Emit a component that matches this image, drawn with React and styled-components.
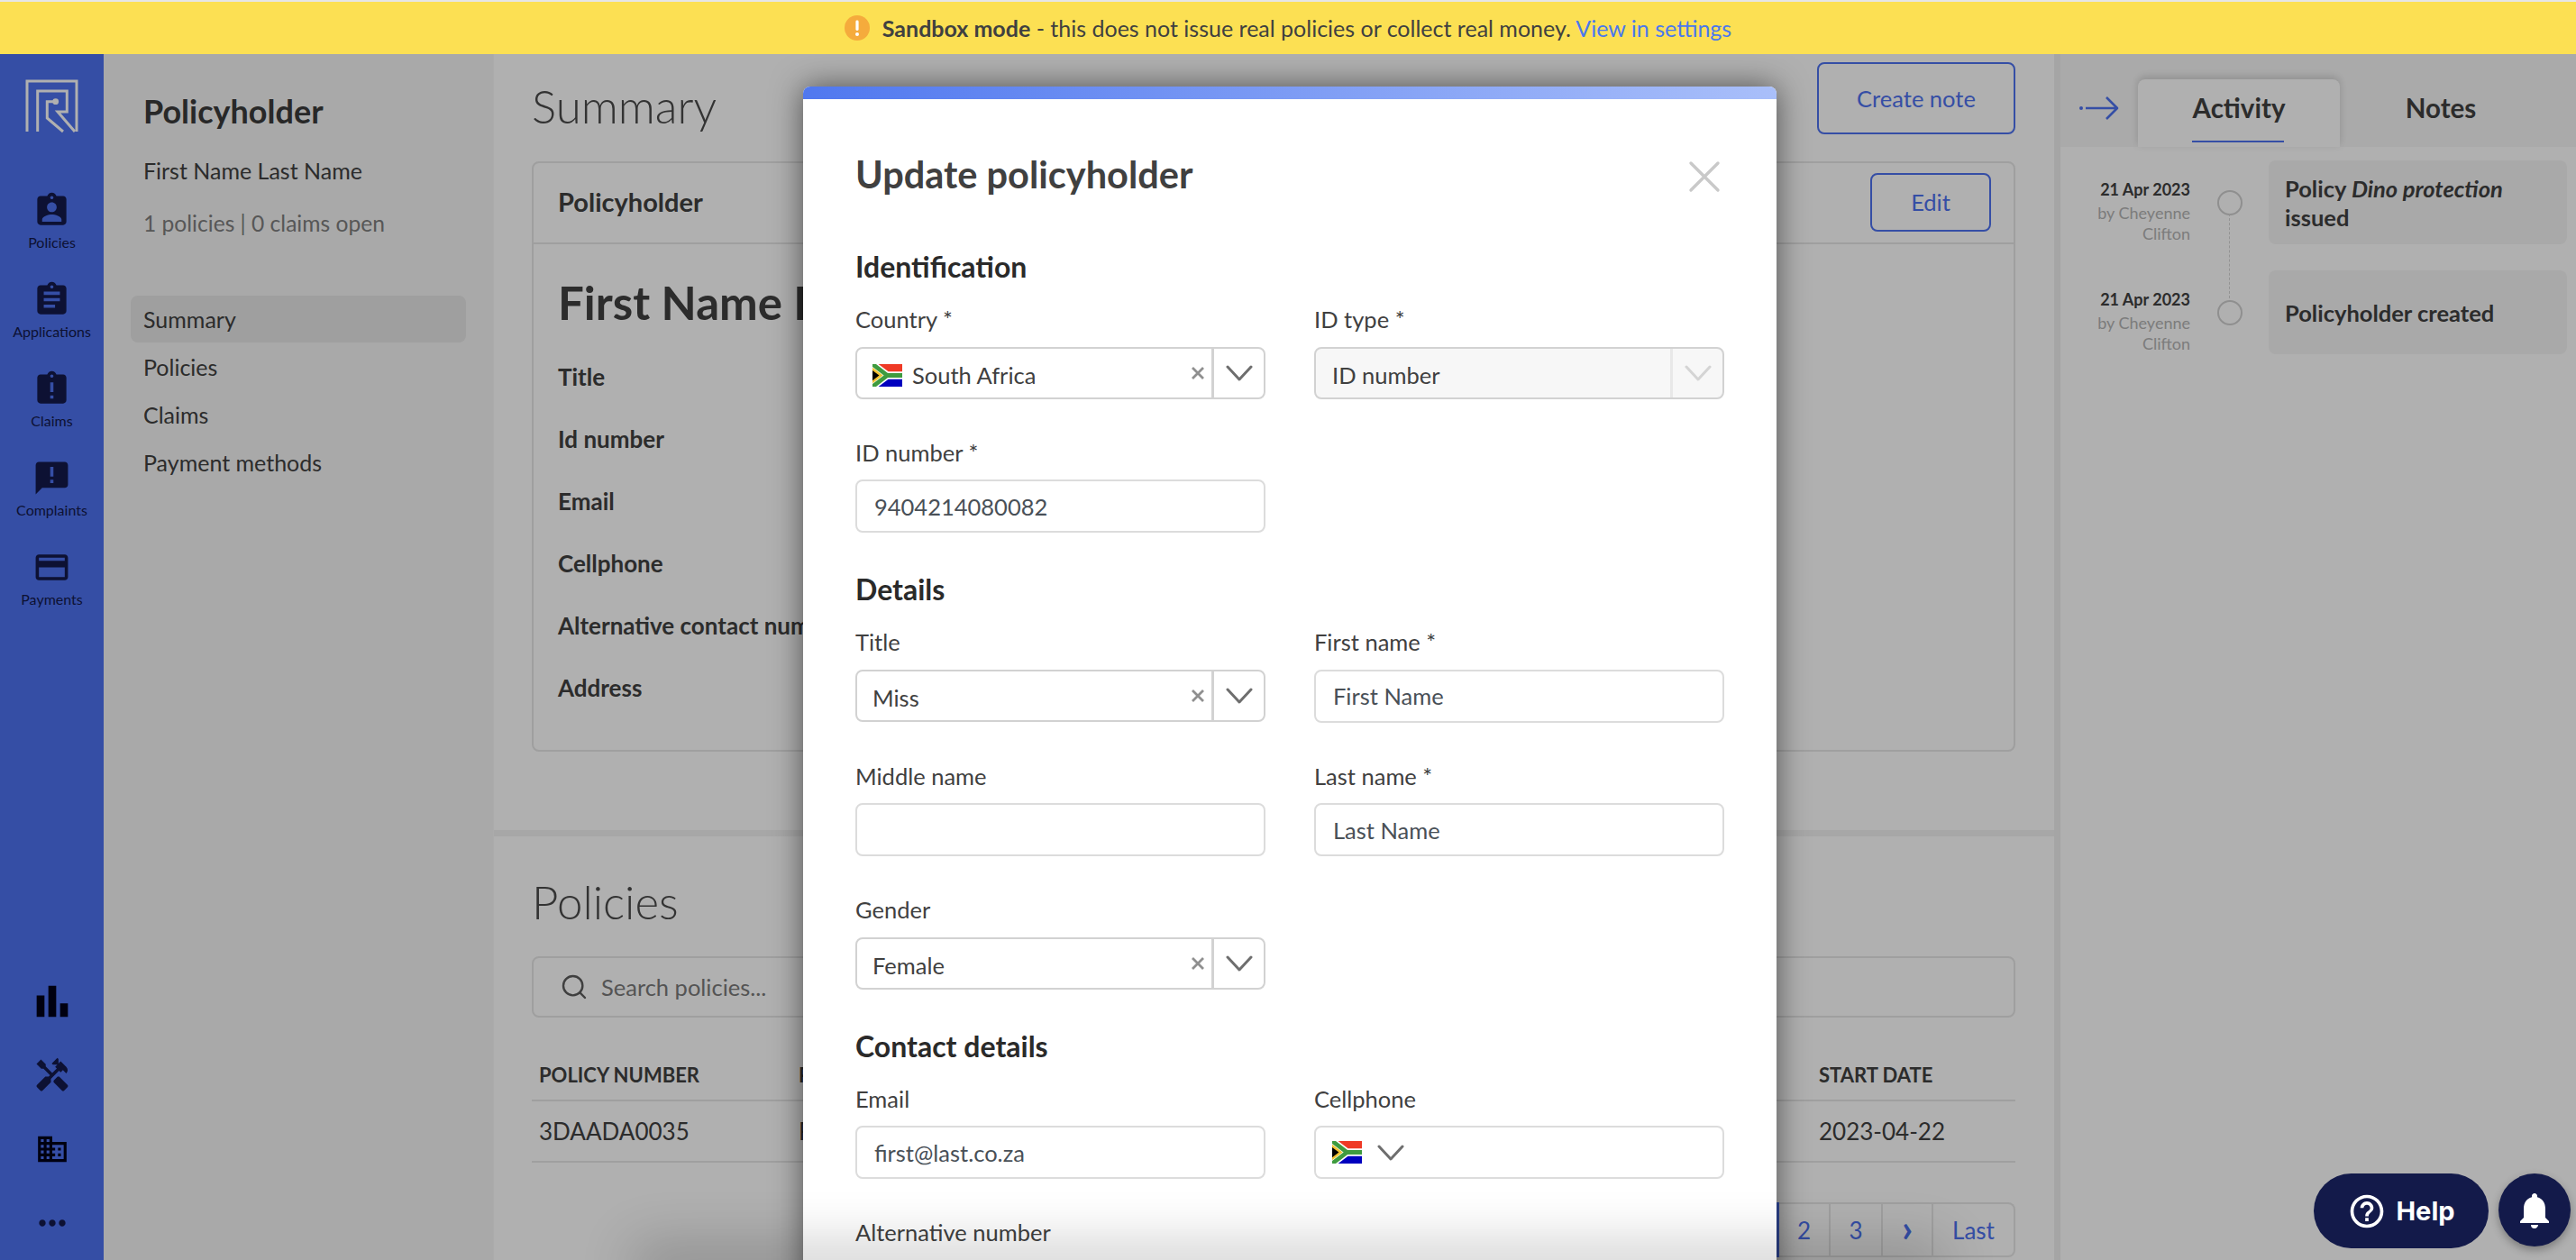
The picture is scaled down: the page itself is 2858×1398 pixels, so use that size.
import React from "react";
import styled, { createGlobalStyle } from "styled-components";
import {
  MdAssignmentInd,
  MdAssignment,
  MdAssignmentLate,
  MdAnnouncement,
  MdCreditCard,
  MdBarChart,
  MdHandyman,
  MdDomain,
  MdMoreHoriz,
  MdNotifications,
  MdHelpOutline,
} from "react-icons/md";
import { Search } from "lucide-react";

const Global = createGlobalStyle`
  * { box-sizing: border-box; }
  html, body { margin: 0; padding: 0; height: 100%; overflow: hidden; background: #fff; }
  body { font-family: Lato, "Noto Sans", sans-serif; color: #404040; }
`;

const Page = styled.div`
  display: flex;
  flex-direction: column;
  height: 100vh;
  overflow: hidden;
  position: relative;
`;

const Banner = styled.div`
  height: 60px;
  flex: none;
  background: #fce053;
  border-top: 2px solid #e6e6e6;
  display: flex;
  align-items: center;
  justify-content: center;
  gap: 14px;
  font-size: 25px;
  color: #404040;
  b { font-weight: 700; }
  a { color: #4a78ee; text-decoration: none; }
`;

const Shell = styled.div`
  flex: 1;
  min-height: 0;
  display: flex;
`;

const Sidebar = styled.nav`
  width: 115px;
  flex: none;
  background: #4d71ef;
  display: flex;
  flex-direction: column;
  align-items: center;
  color: #13194a;
  padding-top: 28px;
`;

const Logo = styled.svg`
  width: 60px;
  height: 60px;
  margin-bottom: 64px;
  flex: none;
`;

const NavItem = styled.div`
  height: 99px;
  flex: none;
  width: 100%;
  display: flex;
  flex-direction: column;
  align-items: center;
  font-size: 16px;
  line-height: 20px;
  color: #13194a;
  svg { display: block; margin-bottom: 4px; }
`;

const ToolIcons = styled.div`
  margin-top: auto;
  display: flex;
  flex-direction: column;
  align-items: center;
  color: #000018;
`;

const ToolSlot = styled.div`
  height: 82px;
  display: flex;
  align-items: center;
  justify-content: center;
  color: ${(p) => p.$color || "#000018"};
`;

const LeftPanel = styled.aside`
  width: 432px;
  flex: none;
  background: #f5f5f5;
  padding: 41px 30px 0;
`;

const PanelTitle = styled.h2`
  margin: 0;
  padding-left: 14px;
  font-size: 36px;
  line-height: 44px;
  font-weight: 700;
  color: #3a3a3a;
`;

const PanelName = styled.div`
  margin-top: 26px;
  padding-left: 14px;
  font-size: 25px;
  line-height: 36px;
  color: #404040;
`;

const PanelMeta = styled.div`
  margin-top: 23px;
  padding-left: 14px;
  font-size: 24.6px;
  line-height: 36px;
  color: #7e7e7e;
`;

const SideMenu = styled.div`
  margin-top: 62px;
  display: flex;
  flex-direction: column;
  gap: 1px;
`;

const SideLink = styled.div`
  height: 52px;
  line-height: 52px;
  padding-left: 14px;
  border-radius: 8px;
  font-size: 25px;
  color: #404040;
  background: ${(p) => (p.$active ? "#e6e6e6" : "transparent")};
`;

const Main = styled.main`
  width: 1739px;
  flex: none;
  background: #fff;
  border-right: 7px solid #f0f0f0;
  border-left: 1px solid #f8f8f8;
  overflow: hidden;
`;

const Section = styled.section`
  padding: ${(p) => p.$pad};
  border-bottom: ${(p) => (p.$rule ? "7px solid #f2f2f2" : "none")};
`;

const SectionHead = styled.div`
  display: flex;
  justify-content: space-between;
  align-items: flex-start;
  height: 80px;
`;

const PageHeading = styled.h1`
  margin: ${(p) => p.$margin || 0};
  font-weight: 300;
  font-size: 51px;
  line-height: 70px;
  color: #4a4a4a;
`;

const OutlineButton = styled.button`
  width: ${(p) => p.$w};
  height: ${(p) => p.$h};
  border: 2px solid #4d71ef;
  border-radius: 8px;
  background: transparent;
  color: #4d71ef;
  font-family: inherit;
  font-size: 25.5px;
`;

const Card = styled.div`
  margin-top: 30px;
  border: 2px solid #e6e6e6;
  border-radius: 8px;
`;

const CardHead = styled.div`
  height: 90px;
  display: flex;
  justify-content: space-between;
  align-items: center;
  padding: 0 25px 2px 27px;
  border-bottom: 2px solid #e6e6e6;
`;

const CardTitle = styled.div`
  font-size: 29px;
  font-weight: 700;
  color: #404040;
  padding-bottom: 2px;
`;

const CardBody = styled.div`
  padding: 30px 27px 34px;
`;

const BigName = styled.div`
  font-size: 51px;
  line-height: 70px;
  font-weight: 700;
  color: #404040;
  margin-bottom: 13px;
  white-space: nowrap;
`;

const InfoRow = styled.div`
  height: 69px;
  line-height: 69px;
  font-size: 26px;
  font-weight: 700;
  color: #404040;
  white-space: nowrap;
`;

const SearchBox = styled.div`
  margin-top: 25px;
  height: 68px;
  border: 2px solid #e6e6e6;
  border-radius: 8px;
  display: flex;
  align-items: center;
  gap: 14px;
  padding-left: 29px;
  color: #7a7a7a;
  font-size: 25.5px;
`;

const TableGrid = styled.div`
  margin-top: 35px;
  display: grid;
  grid-template-columns: 288px 1fr 226px;
`;

const HeadCell = styled.div`
  height: 58px;
  line-height: 58px;
  padding-left: 8px;
  font-size: 22px;
  font-weight: 700;
  color: #404040;
  border-bottom: 2px solid #e6e6e6;
  text-transform: uppercase;
`;

const BodyCell = styled.div`
  height: 68px;
  line-height: 66px;
  padding-left: 8px;
  font-size: 26px;
  color: #404040;
  border-bottom: 2px solid #e6e6e6;
`;

const Pager = styled.div`
  margin-top: 44px;
  display: flex;
  justify-content: flex-end;
`;

const PageCell = styled.div`
  width: ${(p) => p.$w};
  height: 61px;
  display: flex;
  align-items: center;
  justify-content: center;
  font-size: ${(p) => (p.$arrow ? "42px" : "26px")};
  font-weight: ${(p) => (p.$arrow ? 700 : 400)};
  padding-bottom: ${(p) => (p.$arrow ? "6px" : "0")};
  color: ${(p) => (p.$active ? "#fff" : "#4d71ef")};
  background: ${(p) => (p.$active ? "#4d71ef" : "transparent")};
  border: 2px solid ${(p) => (p.$active ? "#4d71ef" : "#e6e6e6")};
  border-left-width: ${(p) => (p.$active ? "2px" : "0")};
  &:last-child { border-radius: 0 8px 8px 0; }
`;

const RightPanel = styled.aside`
  flex: 1;
  min-width: 0;
  background: #fff;
`;

const TabBar = styled.div`
  height: 103px;
  background: #f7f7f7;
  display: flex;
  align-items: flex-end;
  padding-left: 21px;
`;

const CollapseArrow = styled.svg`
  width: 44px;
  height: 28px;
  flex: none;
  margin: 0 21px 29px 0;
`;

const Tab = styled.div`
  width: 224px;
  height: 75px;
  position: relative;
  display: flex;
  align-items: center;
  justify-content: center;
  padding-bottom: 12px;
  font-size: 29.5px;
  font-weight: 700;
  color: #404040;
  background: ${(p) => (p.$active ? "#fff" : "transparent")};
  border-radius: 8px 8px 0 0;
  box-shadow: ${(p) => (p.$active ? "0 -3px 10px rgba(0,0,0,.16)" : "none")};
`;

const TabUnderline = styled.span`
  position: absolute;
  bottom: 5px;
  left: 60px;
  width: 102px;
  height: 2px;
  background: #4d71ef;
`;

const Timeline = styled.div`
  padding: 15px 10px 0 0;
  display: flex;
  flex-direction: column;
  gap: 29px;
`;

const TimelineRow = styled.div`
  display: grid;
  grid-template-columns: 144px 87px 1fr;
  min-height: 93px;
`;

const TimeMeta = styled.div`
  text-align: right;
  padding-top: 18px;
  padding-left: 20px;
  font-size: 18px;
  line-height: 23px;
  color: #b4b4b4;
`;

const TimeDate = styled.div`
  font-weight: 700;
  font-size: 18px;
  line-height: 29px;
  color: #404040;
`;

const DotCell = styled.div`
  display: flex;
  align-items: center;
  justify-content: center;
`;

const Dot = styled.div`
  width: 28px;
  height: 28px;
  border-radius: 50%;
  border: 2px solid #d0d0d0;
  position: relative;
  ${(p) =>
    p.$line
      ? `&::after {
          content: "";
          position: absolute;
          left: 11px;
          top: 100%;
          height: 94px;
          border-left: 1px dashed #d6d6d6;
        }`
      : ""}
`;

const EventCard = styled.div`
  background: #f5f5f5;
  border-radius: 8px;
  display: flex;
  align-items: center;
  padding: 0 18px;
  font-size: 25.5px;
  line-height: 32px;
  font-weight: 700;
  color: #404040;
  em { font-style: italic; }
`;

const Backdrop = styled.div`
  position: absolute;
  inset: 60px 0 0 0;
  background: rgba(0, 0, 0, 0.31);
  display: flex;
  justify-content: center;
  padding-left: 4px;
  overflow: hidden;
`;

const Modal = styled.div`
  width: 1080px;
  margin-top: 36px;
  background: #fff;
  border-radius: 8px 8px 0 0;
  box-shadow: 0 0 34px rgba(0, 0, 0, 0.55);
  flex: none;
  height: max-content;
  border-top: 14px solid transparent;
  position: relative;
  padding: 58px 58px 200px;
`;

const ModalBar = styled.div`
  position: absolute;
  top: -14px;
  left: 0;
  right: 0;
  height: 14px;
  border-radius: 8px 8px 0 0;
  background: linear-gradient(90deg, #5078ef, #a9bffa);
`;

const ModalHead = styled.div`
  display: flex;
  justify-content: space-between;
  align-items: center;
  height: 50px;
  margin-bottom: 58px;
  padding-right: 4px;
`;

const ModalTitle = styled.h2`
  margin: 0;
  font-size: 41.5px;
  line-height: 50px;
  font-weight: 700;
  color: #404040;
`;

const CloseIcon = styled.svg`
  width: 36px;
  height: 36px;
  margin-top: 6px;
`;

const GroupTitle = styled.h3`
  margin: ${(p) => p.$top || "43px"} 0 20px;
  font-size: 32px;
  line-height: 40px;
  font-weight: 700;
  color: #2a2a2a;
`;

const FieldGrid = styled.div`
  display: grid;
  grid-template-columns: 455px 455px;
  column-gap: 54px;
  row-gap: 41px;
`;

const Field = styled.div`
  grid-column: ${(p) => p.$col || "auto"};
`;

const Label = styled.label`
  display: block;
  font-size: 25.5px;
  line-height: 36px;
  margin-bottom: ${(p) => p.$gap || "12.5px"};
  color: #404040;
`;

const TextInput = styled.input`
  display: block;
  width: 100%;
  height: 59px;
  border: 2px solid #dcdcdc;
  border-radius: 8px;
  padding: 0 19px;
  font-family: inherit;
  font-size: 25.5px;
  color: #495057;
  background: #fff;
  outline: none;
`;

const SelectBox = styled.div`
  height: 58px;
  border: 2px solid #d2d2d2;
  border-radius: 8px;
  display: flex;
  align-items: stretch;
  background: ${(p) => (p.$disabled ? "#f7f7f7" : "#fff")};
  color: #404040;
  font-size: 25.5px;
`;

const SelectValue = styled.div`
  flex: 1;
  display: flex;
  align-items: center;
  gap: 11px;
  padding: 5px 0 0 ${(p) => (p.$disabled ? "18px" : "17px")};
`;

const ClearMark = styled.svg`
  width: 16px;
  height: 16px;
  align-self: center;
  margin: 0 7px 0 0;
  flex: none;
`;

const SelectDivider = styled.div`
  width: 3px;
  background: ${(p) => (p.$disabled ? "#e8e8e8" : "#d2d2d2")};
`;

const ChevronWrap = styled.div`
  width: 55px;
  display: flex;
  align-items: center;
  justify-content: center;
  flex: none;
`;

const PhoneBox = styled.div`
  height: 59px;
  border: 2px solid #dcdcdc;
  border-radius: 8px;
  display: flex;
  align-items: center;
  padding-left: 18px;
`;

const PhoneChevron = styled.div`
  margin-left: 17px;
  display: flex;
`;

const FooterShade = styled.div`
  position: absolute;
  bottom: -14px;
  left: 720px;
  width: 1420px;
  height: 14px;
  box-shadow: 0 0 60px 18px rgba(0, 0, 0, 0.2);
  pointer-events: none;
`;

const Floating = styled.div`
  position: absolute;
  right: 6px;
  bottom: 13px;
  display: flex;
  gap: 11px;
  align-items: flex-start;
`;

const HelpButton = styled.div`
  width: 194px;
  height: 83px;
  border-radius: 42px;
  background: #131a4a;
  color: #fff;
  display: flex;
  align-items: center;
  justify-content: center;
  gap: 10px;
  font-family: Inter, "Noto Sans", sans-serif;
  font-size: 29px;
  font-weight: 700;
`;

const BellButton = styled.div`
  width: 80px;
  height: 81px;
  border-radius: 50%;
  background: #131a4a;
  color: #fff;
  display: flex;
  align-items: center;
  justify-content: center;
  box-shadow: 0 4px 10px rgba(0, 0, 0, 0.3);
`;

const Flag = ({ w = 33, h = 25 }) => (
  <svg width={w} height={h} viewBox="0 0 900 600" preserveAspectRatio="none" style={{ flex: "none" }}>
    <rect width="900" height="300" fill="#ef3a26" />
    <rect y="300" width="900" height="300" fill="#0000bf" />
    <path d="M-40 -27 L450 300 H940 M-40 627 L450 300" fill="none" stroke="#fff" strokeWidth="200" />
    <path d="M-40 -27 L450 300 H940 M-40 627 L450 300" fill="none" stroke="#3f9b3f" strokeWidth="120" />
    <path d="M0 90 L315 300 L0 510Z" fill="#f2c230" />
    <path d="M0 165 L202 300 L0 435Z" fill="#000" />
  </svg>
);

const Chevron = ({ color = "#6e6e6e" }) => (
  <svg width="30" height="18" viewBox="0 0 30 18" fill="none">
    <path d="M2 2 L15 16 L28 2" stroke={color} strokeWidth="3" strokeLinecap="round" strokeLinejoin="round" />
  </svg>
);

const Select = ({ value, flag, disabled }) => (
  <SelectBox $disabled={disabled}>
    <SelectValue $disabled={disabled}>
      {flag && <Flag />}
      <span>{value}</span>
    </SelectValue>
    {!disabled && (
      <ClearMark viewBox="0 0 16 16">
        <path d="M2 2 L14 14 M14 2 L2 14" stroke="#8f8f8f" strokeWidth="2.8" />
      </ClearMark>
    )}
    <SelectDivider $disabled={disabled} />
    <ChevronWrap>
      <Chevron color={disabled ? "#d4d4d4" : "#6e6e6e"} />
    </ChevronWrap>
  </SelectBox>
);

const events = [
  { body: <>Policy <em>Dino protection</em> issued</>, line: true },
  { body: <>Policyholder created</>, line: false },
];

const navItems = [
  ["Policies", MdAssignmentInd],
  ["Applications", MdAssignment],
  ["Claims", MdAssignmentLate],
  ["Complaints", MdAnnouncement],
  ["Payments", MdCreditCard],
];

export default function App() {
  return (
    <Page>
      <Global />
      <Banner>
        <svg width="28" height="28" viewBox="0 0 28 28">
          <circle cx="14" cy="14" r="14" fill="#f5ab3c" />
          <rect x="12.4" y="5.5" width="3.2" height="11.5" rx="1.4" fill="#fff" />
          <circle cx="14" cy="21" r="2" fill="#fff" />
        </svg>
        <div>
          <b>Sandbox mode</b> - this does not issue real policies or collect real money. <a>View in settings</a>
        </div>
      </Banner>
      <Shell>
        <Sidebar>
          <Logo viewBox="0 0 60 60" fill="none" stroke="#fff" strokeWidth="3">
            <path d="M2 58 V2 H57 V58" />
            <path d="M13.7 58 V13 H46.3 V36 H36 L55 58" />
            <path d="M33 24.7 H24.3 V43 L42 58" />
            <circle cx="33.7" cy="24.7" r="3.4" fill="#fff" stroke="none" />
          </Logo>
          {navItems.map(([label, Icon]) => (
            <NavItem key={label}>
              <Icon size={43} />
              {label}
            </NavItem>
          ))}
          <ToolIcons>
            <ToolSlot><MdBarChart size={52} /></ToolSlot>
            <ToolSlot $color="#13194a"><MdHandyman size={42} /></ToolSlot>
            <ToolSlot><MdDomain size={38} /></ToolSlot>
            <ToolSlot $color="#13194a"><MdMoreHoriz size={44} /></ToolSlot>
          </ToolIcons>
        </Sidebar>
        <LeftPanel>
          <PanelTitle>Policyholder</PanelTitle>
          <PanelName>First Name Last Name</PanelName>
          <PanelMeta>1 policies | 0 claims open</PanelMeta>
          <SideMenu>
            <SideLink $active>Summary</SideLink>
            <SideLink>Policies</SideLink>
            <SideLink>Claims</SideLink>
            <SideLink>Payment methods</SideLink>
          </SideMenu>
        </LeftPanel>
        <Main>
          <Section $pad="9px 43px 87px 42px" $rule>
            <SectionHead>
              <PageHeading $margin="14px 0 0">Summary</PageHeading>
              <OutlineButton $w="220px" $h="80px">Create note</OutlineButton>
            </SectionHead>
            <Card>
              <CardHead>
                <CardTitle>Policyholder</CardTitle>
                <OutlineButton $w="134px" $h="65px">Edit</OutlineButton>
              </CardHead>
              <CardBody>
                <BigName>First Name Last Name</BigName>
                <InfoRow>Title</InfoRow>
                <InfoRow>Id number</InfoRow>
                <InfoRow>Email</InfoRow>
                <InfoRow>Cellphone</InfoRow>
                <InfoRow>Alternative contact number</InfoRow>
                <InfoRow>Address</InfoRow>
              </CardBody>
            </Card>
          </Section>
          <Section $pad="38px 43px 0 42px">
            <PageHeading>Policies</PageHeading>
            <SearchBox>
              <Search size={32} strokeWidth={1.8} color="#5c5c5c" />
              Search policies...
            </SearchBox>
            <TableGrid>
              <HeadCell>Policy number</HeadCell>
              <HeadCell>Policyholder</HeadCell>
              <HeadCell>Start date</HeadCell>
              <BodyCell>3DAADA0035</BodyCell>
              <BodyCell>First Name</BodyCell>
              <BodyCell>2023-04-22</BodyCell>
            </TableGrid>
            <Pager>
              <PageCell $w="57px" $active>1</PageCell>
              <PageCell $w="57px">2</PageCell>
              <PageCell $w="58px">3</PageCell>
              <PageCell $w="56px" $arrow>›</PageCell>
              <PageCell $w="91px">Last</PageCell>
            </Pager>
          </Section>
        </Main>
        <RightPanel>
          <TabBar>
            <CollapseArrow viewBox="0 0 44 28" fill="none">
              <circle cx="2" cy="14" r="2" fill="#4d71ef" />
              <path d="M7 14 H41 M30 2 L42 14 L30 26" stroke="#4d71ef" strokeWidth="2.6" strokeLinejoin="round" />
            </CollapseArrow>
            <Tab $active>
              Activity
              <TabUnderline />
            </Tab>
            <Tab>Notes</Tab>
          </TabBar>
          <Timeline>
            {events.map((event, i) => (
              <TimelineRow key={i}>
                <TimeMeta>
                  <TimeDate>21 Apr 2023</TimeDate>
                  by Cheyenne Clifton
                </TimeMeta>
                <DotCell>
                  <Dot $line={event.line} />
                </DotCell>
                <EventCard>
                  <div>{event.body}</div>
                </EventCard>
              </TimelineRow>
            ))}
          </Timeline>
        </RightPanel>
      </Shell>
      <Backdrop>
        <Modal>
          <ModalBar />
          <ModalHead>
            <ModalTitle>Update policyholder</ModalTitle>
            <CloseIcon viewBox="0 0 36 36">
              <path d="M3 3 L33 33 M33 3 L3 33" stroke="#c9c9c9" strokeWidth="3.4" strokeLinecap="round" />
            </CloseIcon>
          </ModalHead>
          <GroupTitle $top="0">Identification</GroupTitle>
          <FieldGrid>
            <Field>
              <Label>Country *</Label>
              <Select value="South Africa" flag />
            </Field>
            <Field>
              <Label>ID type *</Label>
              <Select value="ID number" disabled />
            </Field>
            <Field>
              <Label>ID number *</Label>
              <TextInput readOnly value="9404214080082" />
            </Field>
          </FieldGrid>
          <GroupTitle>Details</GroupTitle>
          <FieldGrid>
            <Field>
              <Label>Title</Label>
              <Select value="Miss" />
            </Field>
            <Field>
              <Label>First name *</Label>
              <TextInput readOnly value="First Name" />
            </Field>
            <Field>
              <Label>Middle name</Label>
              <TextInput readOnly value="" />
            </Field>
            <Field>
              <Label>Last name *</Label>
              <TextInput readOnly value="Last Name" />
            </Field>
            <Field>
              <Label>Gender</Label>
              <Select value="Female" />
            </Field>
          </FieldGrid>
          <GroupTitle>Contact details</GroupTitle>
          <FieldGrid>
            <Field>
              <Label>Email</Label>
              <TextInput readOnly value="first@last.co.za" />
            </Field>
            <Field>
              <Label>Cellphone</Label>
              <PhoneBox>
                <Flag />
                <PhoneChevron><Chevron /></PhoneChevron>
              </PhoneBox>
            </Field>
            <Field>
              <Label $gap="20px">Alternative number</Label>
              <TextInput readOnly value="" />
            </Field>
          </FieldGrid>
        </Modal>
      </Backdrop>
      <FooterShade />
      <Floating>
        <HelpButton>
          <MdHelpOutline size={44} />
          Help
        </HelpButton>
        <BellButton>
          <MdNotifications size={48} />
        </BellButton>
      </Floating>
    </Page>
  );
}
